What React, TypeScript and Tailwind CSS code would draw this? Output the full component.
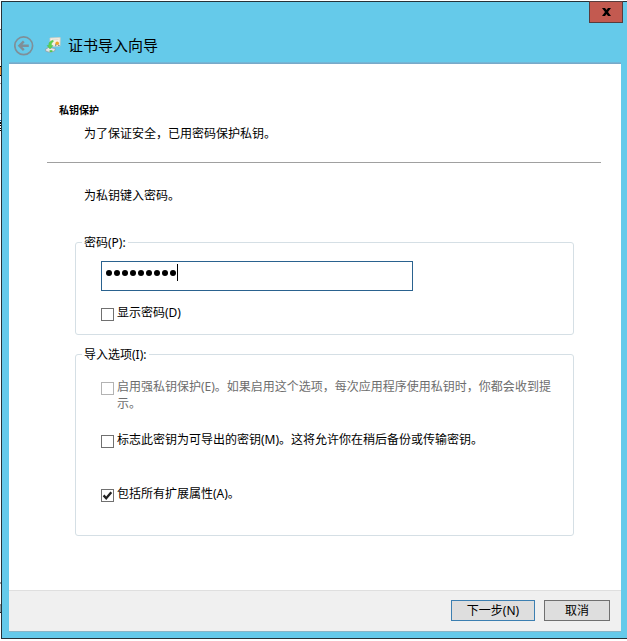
import type { ReactNode } from "react"

// Sliver of the window behind, visible along the left edge
function BackdropEdge() {
  return (
    <div className="flex h-[641px] w-px shrink-0 flex-col">
      <span className="mt-[29px] h-px bg-[#6b6b6b]" />
      <span className="h-[30px] bg-[#e9e9e9]" />
      <span className="mt-[6px] h-px bg-black" />
      <span className="h-[8px] bg-[#f0a04b]" />
      <span className="h-px bg-black" />
      <span className="mt-[7px] h-px bg-[#a0a0a0]" />
      <span className="mt-[29px] h-px bg-[#a0a0a0]" />
      <span className="mt-[6px] h-px bg-[#1c6fc0]" />
      <span className="mt-px h-[2px] bg-black" />
      <span className="mt-px h-px bg-black" />
      <span className="mt-[2px] h-px bg-black" />
      <span className="mt-px h-px bg-black" />
      <span className="mt-[451px] h-[2px] bg-[#9a9a9a]" />
      <span className="mt-[20px] h-[2px] bg-[#8c8c8c]" />
      <span className="h-[6px] bg-[#8fa3a8]" />
      <span className="h-px bg-[#202020]" />
    </div>
  )
}

function BackButton() {
  return (
    <svg width="20" height="20" viewBox="0 0 20 20" fill="none" className="shrink-0">
      <circle cx="9.7" cy="9.8" r="8.9" stroke="#7f8f98" strokeWidth="1.7" />
      <path d="M14.8 9.8H6M9.8 5.4L5.4 9.8L9.8 14.2" stroke="#7f8f98" strokeWidth="2.4" />
    </svg>
  )
}

function CertificateIcon() {
  return (
    <svg width="16" height="16" viewBox="0 0 16 16" className="block shrink-0">
      <path d="M5 1L15.2 0.6L15 9L5 9.4Z" fill="#f7f1e6" stroke="#d3cdbf" strokeWidth="0.8" />
      <path d="M7.5 2.8L13.5 2.6" stroke="#dcd7cc" strokeWidth="0.8" />
      <path d="M10 7.5L11.8 7L10.8 9.4ZM13 7.2L15 9L13.2 8.8Z" fill="#49637c" />
      <circle cx="12.2" cy="6.2" r="1.8" fill="#eda52a" />
      <path d="M0.6 12.2L3.6 10.4L10.4 11.6L9.6 14L5 15.4L0.8 14.2Z" fill="#e3e7e7" stroke="#8b9a9e" strokeWidth="0.7" />
      <path d="M8 3.2C5 3.8 3.6 5.6 3.8 8.6H2.2L5 12L8 8.6H6.4C6.3 6.6 6.9 5.4 8.4 4.6Z" fill="#5ed34f" stroke="#3fb53c" strokeWidth="0.4" />
      <path d="M4.6 13.2H7.4V15H4.6Z" fill="#55c84d" />
    </svg>
  )
}

function CheckOption({
  checked = false,
  disabled = false,
  children,
}: {
  checked?: boolean
  disabled?: boolean
  children: ReactNode
}) {
  return (
    <div className={disabled ? "flex gap-[3px] text-[#6d6d6d]" : "flex gap-[3px] text-black"}>
      <span
        className={
          disabled
            ? "mt-[4px] size-[13px] shrink-0 border border-[#b3b3b3] bg-white"
            : "mt-[4px] size-[13px] shrink-0 border border-[#707070] bg-white"
        }
      >
        {checked && (
          <svg width="11" height="11" viewBox="0 0 11 11" fill="none">
            <path d="M1.6 5.4L4.2 8.2L9.3 2.2" stroke="#212121" strokeWidth="2.3" />
          </svg>
        )}
      </span>
      <span>{children}</span>
    </div>
  )
}

function Group({ title, className, children }: { title: string; className: string; children: ReactNode }) {
  return (
    <section className={`${className} ml-[66px] w-[499px] rounded-[3px] border border-[#d5dfe5]`}>
      <h2 className="-mt-[9px] ml-[6px] h-[17px] w-fit bg-white px-[2px]">{title}</h2>
      {children}
    </section>
  )
}

export default function App() {
  return (
    <div className="flex h-[641px] w-[627px] overflow-hidden bg-white font-['Noto_Sans','Noto_Sans_CJK_SC',sans-serif] text-[12px] leading-[17px] text-black">
      <BackdropEdge />
      <div className="mt-px flex h-[638px] w-[626px] flex-col border-y border-l border-[#263238] bg-[#65caea] pr-[6px] pl-[7px]">
        <header className="flex h-[62px] shrink-0 flex-col">
          <div className="-mr-[2px] flex justify-end">
            <button className="-mt-px flex h-[22px] w-[34px] items-center justify-center border border-[#583c3d] bg-[#c35a50]">
              <svg width="9" height="8" viewBox="0 0 9 8">
                <path d="M0 0H3L4.5 2L6 0H9L6 4L9 8H6L4.5 6L3 8H0L3 4Z" fill="#000" />
              </svg>
            </button>
          </div>
          <div className="mt-[12px] flex h-[22px] items-center pl-[5px]">
            <BackButton />
            <span className="-mt-[3px] ml-[11px]">
              <CertificateIcon />
            </span>
            <h1 className="-mt-[2px] ml-[7px] text-[15px] leading-[22px]">证书导入向导</h1>
          </div>
          <div className="mt-auto h-[2px] bg-linear-to-b from-[#6fbcdc] to-[#7ba3c2]" />
        </header>

        <main className="flex h-[526px] shrink-0 flex-col bg-white">
          <h2 className="mt-[38px] ml-[50px] text-[10px] leading-[16px] font-bold">私钥保护</h2>
          <p className="mt-[7px] ml-[75px]">为了保证安全，已用密码保护私钥。</p>
          <hr className="mt-[20px] mr-[20px] ml-[38px] border-[#a0a0a0]" />
          <p className="mt-[24px] ml-[75px]">为私钥键入密码。</p>

          <Group title="密码(P):" className="mt-[38px] h-[93px]">
            <div className="mt-[10px] ml-[25px] flex h-[30px] w-[312px] items-start border border-[#2a628f] pt-[2px] pl-[4px]">
              <div className="flex h-[18px] items-center gap-[2px]">
                {Array.from({ length: 9 }, (_, i) => (
                  <span key={i} className="size-[6px] rounded-full bg-black" />
                ))}
              </div>
              <span className="ml-px h-[17px] w-px bg-black" />
            </div>
            <div className="mt-[13px] ml-[25px]">
              <CheckOption>显示密码(D)</CheckOption>
            </div>
          </Group>

          <Group title="导入选项(I):" className="mt-[19px] h-[182px]">
            <div className="mt-[15px] ml-[25px] flex flex-col">
              <CheckOption disabled>
                启用强私钥保护(E)。如果启用这个选项，每次应用程序使用私钥时，你都会收到提
                <br />
                示。
              </CheckOption>
              <div className="mt-[19px]">
                <CheckOption>标志此密钥为可导出的密钥(M)。这将允许你在稍后备份或传输密钥。</CheckOption>
              </div>
              <div className="mt-[37px]">
                <CheckOption checked>包括所有扩展属性(A)。</CheckOption>
              </div>
            </div>
          </Group>
        </main>

        <footer className="flex h-[42px] shrink-0 justify-end gap-[9px] border-t border-b border-t-[#dfdfdf] border-b-[#8bb5c6] bg-[#f0f0f0] pt-[9px] pr-[11px]">
          <button className="h-[21px] w-[84px] border border-[#3c7fb1] bg-[#dedede]">下一步(N)</button>
          <button className="h-[21px] w-[66px] border border-[#707070] bg-[#dedede]">取消</button>
        </footer>
      </div>
    </div>
  )
}
